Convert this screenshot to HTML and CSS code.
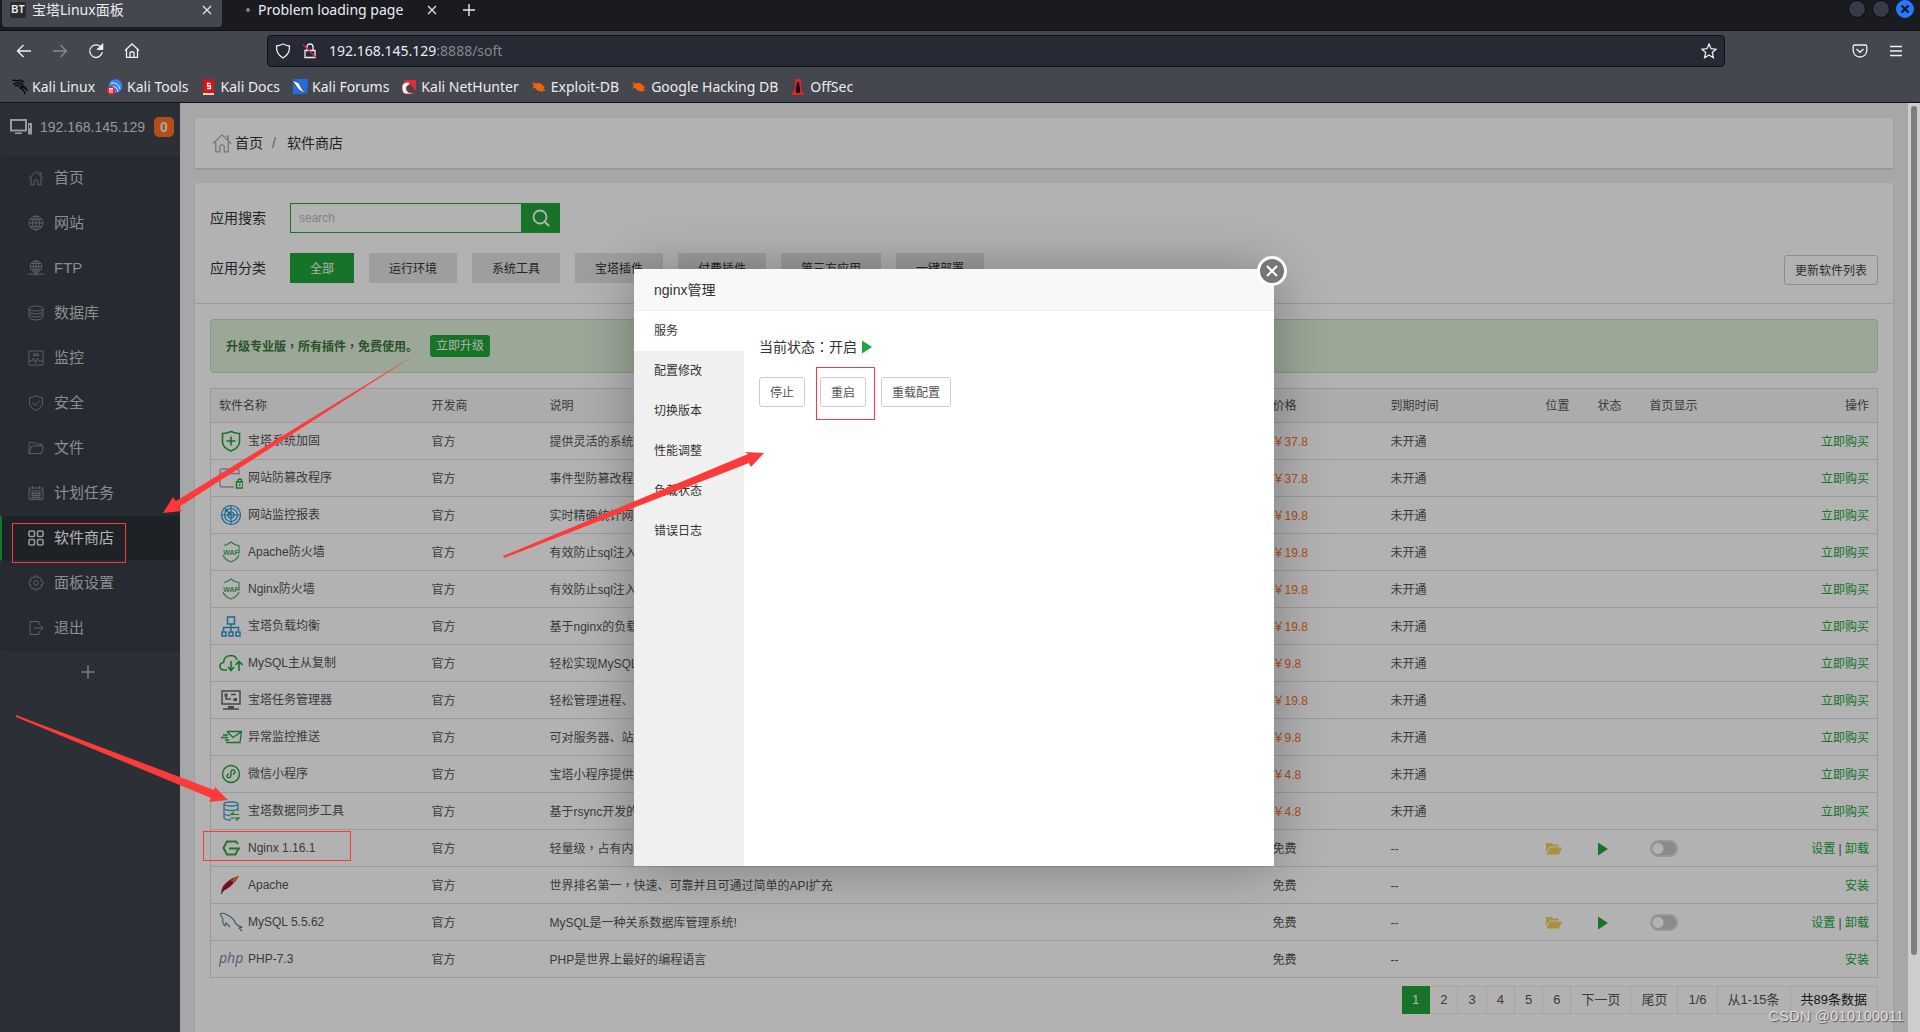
FILE: index.html
```html
<!DOCTYPE html>
<html lang="zh-CN">
<head>
<meta charset="utf-8">
<title>宝塔Linux面板</title>
<link rel="stylesheet" href="styles.css">
</head>
<body>
<svg class="defs" aria-hidden="true">
  <symbol id="i-waf" viewBox="0 0 24 24"><path d="M5 5.500Q9 4.500 12 2Q15 5 20 5.500V14M4 15Q5 19 12 22Q19 19 20 15" fill="none" stroke="#48ac5c" stroke-width="1.100"/><text x="12" y="14.500" text-anchor="middle" font-size="7" font-weight="700" font-family="Liberation Sans, sans-serif" fill="#48ac5c">WAF</text></symbol>
  <symbol id="i-folder" viewBox="0 0 16 14"><path d="M0 3V1.500Q0 1 .5 1H5.500L7 2.500H12.500V4.500H4.500Q3 4.500 2.500 6L0 11Z" fill="#f0cf5c"/><path d="M4 5.500H16L13 12.500H.5Z" fill="#f0cf5c"/></symbol>
  <symbol id="i-play" viewBox="0 0 10 14"><path d="M0 .5L10 7L0 13.500Z" fill="#20a53a"/></symbol>
  <symbol id="i-close" viewBox="0 0 10 10"><path d="M1 1L9 9M9 1L1 9" fill="none" stroke="#e4e4e8" stroke-width="1.300"/></symbol>
  <symbol id="i-bug" viewBox="0 0 16 16"><path d="M1 3L5 4.500Q9 3 12 6.500L14 8L12.500 9L14.500 12L12 11.500L11 13L9 12Q5.500 12 4.500 9L1 9.500L3 7.500L1.500 6L3 5.500Z" fill="#f0640c"/></symbol>
  <symbol id="i-home" viewBox="0 0 16 16"><path d="M.7 8.500L8 1.500L15.300 8.500M3 7V15H6.200V10.500Q8 8.500 9.800 10.500V15H13V7M11 2.500H13V5.500" fill="none" stroke="currentColor"/></symbol>
</svg>

<header class="browser">
  <div class="tabs">
    <div class="tab tab-on"><span class="favicon">BT</span><span class="tab-title">宝塔Linux面板</span><button class="plain" aria-label="关闭标签"><svg class="s10"><use href="#i-close"/></svg></button></div>
    <div class="tab"><span class="dot"></span><span class="tab-title">Problem loading page</span><button class="plain" aria-label="关闭标签"><svg class="s10"><use href="#i-close"/></svg></button></div>
    <button class="plain new-tab" aria-label="新标签"><svg class="s12" viewBox="0 0 12 12"><path d="M6 0V12M0 6H12" stroke="#e8e8ec" stroke-width="1.400"/></svg></button>
    <div class="window-buttons">
      <button class="win" aria-label="最小化"></button><button class="win" aria-label="最大化"></button>
      <button class="win win-close" aria-label="关闭"><svg class="s10" viewBox="0 0 10 10"><path d="M1.500 1.500L8.500 8.500M8.500 1.500L1.500 8.500" stroke="#101830" stroke-width="2.400"/></svg></button>
    </div>
  </div>
  <div class="toolbar">
    <nav class="nav-buttons">
      <button class="plain" aria-label="后退"><svg class="s16" viewBox="0 0 16 16"><path d="M15 8H1.500M7.500 2L1.500 8L7.500 14"/></svg></button>
      <button class="plain dim" aria-label="前进"><svg class="s16" viewBox="0 0 16 16"><path d="M1 8H14.500M8.500 2L14.500 8L8.500 14"/></svg></button>
      <button class="plain" aria-label="刷新"><svg class="s16" viewBox="0 0 16 16"><path d="M13.500 5A6.300 6.300 0 1 0 14.300 9M14.500 1V6H9.500"/><path d="M14.500 1.500V6H10Z" fill="#f0f0f4"/></svg></button>
      <button class="plain" aria-label="主页"><svg class="s16" viewBox="0 0 16 16"><path d="M1 7.500L8 1L15 7.500M2.500 6.500V14.300H13.500V6.500M6 14V9.500Q8 8 10 9.500V14"/></svg></button>
    </nav>
    <div class="address">
      <svg class="s16" viewBox="0 0 16 16"><path d="M8 1Q11 2.500 14.500 3Q15 11 8 15Q1 11 1.500 3Q5 2.500 8 1Z"/></svg>
      <svg class="s16" viewBox="0 0 16 16"><path d="M3 7.500H13V14.500H3ZM5 7.500V4Q5 1 8 1Q11 1 11 4V7.500"/><path class="slashed" d="M1 1.500L14.500 15"/></svg>
      <span class="url">192.168.145.129<span class="url-rest">:8888/soft</span></span>
      <button class="plain" aria-label="收藏"><svg class="s16" viewBox="0 0 16 16"><path d="M8 1L10 5.700L15 6.200L11.300 9.600L12.400 14.700L8 12L3.600 14.700L4.700 9.600L1 6.200L6 5.700Z"/></svg></button>
    </div>
    <div class="tools">
      <button class="plain" aria-label="Pocket"><svg class="s16" viewBox="0 0 16 16"><path d="M2.500 2H13.500Q14.800 2 14.800 3.500V7.500A6.800 6.500 0 0 1 1.200 7.500V3.500Q1.200 2 2.500 2ZM4.500 6L8 9.300L11.500 6"/></svg></button>
      <button class="plain" aria-label="菜单"><svg class="s16" viewBox="0 0 16 16"><path d="M2 3.500H14M2 8H14M2 12.500H14"/></svg></button>
    </div>
  </div>
  <nav class="bookmarks">
    <a href="#"><svg class="s16" viewBox="0 0 16 16"><path d="M0 1L5 2L8 1L12 3M1 5L6 4Q10 3 11 7Q8 7 8 9Q12 10 13 15M3 7L8 6M8 8Q14 7 15 12" fill="none" stroke="#0c0d10" stroke-width="1.600"/></svg>Kali Linux</a>
    <a href="#"><svg class="s16" viewBox="0 0 16 16"><circle cx="8.500" cy="7" r="6.800" fill="#3b82f6"/><path d="M4 4Q11 3 13 10M5 8Q10 7 11 13" stroke="#dbe8ff" fill="none"/><circle cx="4" cy="11.500" r="4.300" fill="#e5252a"/><path d="M2 9.500H6M3 9.500V14M5 9.500V14" stroke="#fff"/></svg>Kali Tools</a>
    <a href="#"><svg class="s16" viewBox="0 0 16 16"><path d="M2 0H13V16H2Z" fill="#d81414"/><path d="M2 14H13V16H2Z" fill="#e7d6d3"/><path d="M9.500 4.500H6.500V7H9.500V9.500H6" fill="none" stroke="#fff" stroke-width="1.300"/></svg>Kali Docs</a>
    <a href="#"><svg class="s16" viewBox="0 0 16 16"><path d="M1 0H16L15 15H1Z" fill="#1e6fe6"/><path d="M0 1L7 4L10 10L14 15L7 11L4 7Z" fill="#f4f7ff" stroke="#222" stroke-width=".6"/></svg>Kali Forums</a>
    <a href="#"><svg class="s16" viewBox="0 0 16 16"><path d="M3 1H15V12L9 5L4 8Z" fill="#e22b35"/><path d="M1 10Q0 3 7 3Q10 4 8 6Q3 8 7 13L14 15H4Q1 14 1 10Z" fill="#f5f2f2" stroke="#b01824" stroke-width=".7"/></svg>Kali NetHunter</a>
    <a href="#"><svg class="s16"><use href="#i-bug"/></svg>Exploit-DB</a>
    <a href="#"><svg class="s16"><use href="#i-bug"/></svg>Google Hacking DB</a>
    <a href="#"><svg class="s16" viewBox="0 0 16 16"><path d="M5 0H11V10L14 16H1L5 10Z" fill="#e02424"/><path d="M7 3H9L10 10V14H6V10Z" fill="#220808"/></svg>OffSec</a>
  </nav>
</header>

<div class="viewport">
  <div class="page">
    <aside class="sidebar">
      <div class="host">
        <svg class="host-icon" viewBox="0 0 22 16"><path d="M1 1H16V11.500H1Z" fill="none" stroke="#dcdcdc" stroke-width="2"/><path d="M5 13.500H12V15H5ZM18 4H22V15.500H18Z" fill="#dcdcdc"/><path d="M19.500 6V9" stroke="#555"/></svg>
        <span>192.168.145.129</span><b class="badge">0</b>
      </div>
      <nav class="menu">
        <a href="#"><svg class="s16"><use href="#i-home"/></svg>首页</a>
        <a href="#"><svg class="s16" viewBox="0 0 16 16"><circle cx="8" cy="8" r="7"/><ellipse cx="8" cy="8" rx="3.500" ry="7"/><path d="M8 1V15M1 8H15M2 4.500H14M2 11.500H14"/></svg>网站</a>
        <a href="#"><svg class="s16" viewBox="0 0 16 16"><circle cx="8" cy="6.500" r="5.800"/><ellipse cx="8" cy="6.500" rx="2.800" ry="5.800"/><path d="M8 1V12M2 6.500H14M3 3.500H13M3 9.500H13M0 14H16M6 14.500H10"/></svg>FTP</a>
        <a href="#"><svg class="s16" viewBox="0 0 16 16"><ellipse cx="8" cy="3.500" rx="7" ry="2.500"/><path d="M1 3.500V12.500Q3 15 8 15Q13 15 15 12.500V3.500M1 6.500Q3 9 8 9Q13 9 15 6.500M1 9.500Q3 12 8 12Q13 12 15 9.500"/></svg>数据库</a>
        <a href="#"><svg class="s16" viewBox="0 0 16 16"><path d="M1 1H15V15H1ZM1 11H4L5.500 8L7.500 13L9.500 8L11 11H15M5 4H11M5 5.500H11"/></svg>监控</a>
        <a href="#"><svg class="s16" viewBox="0 0 16 16"><path d="M8 .7Q11 2.500 14.500 2.500V8Q14 13 8 15.500Q2 13 1.500 8V2.500Q5 2.500 8 .7ZM4.500 7.500L7.300 10.500L12 5.500"/></svg>安全</a>
        <a href="#"><svg class="s16" viewBox="0 0 16 16"><path d="M1 13.500V3.500Q1 2.500 2 2.500H6L7.500 4H13.500V6M1 13.500L3.500 6H15.300L13.500 13.500Z"/></svg>文件</a>
        <a href="#"><svg class="s16" viewBox="0 0 16 16"><path d="M1 3H15V14.500H1ZM1 6H15M4.500 1V4M11.500 1V4M3 8.500H13M3 10.500H13M3 12.500H13M5 7V14M8 7V14M11 7V14"/></svg>计划任务</a>
        <a href="#" class="on"><svg class="s16" viewBox="0 0 16 16"><g stroke-width="1.600"><rect x="1" y="1" width="5.500" height="5.500" rx="1"/><rect x="9.500" y="1" width="5.500" height="5.500" rx="1"/><rect x="1" y="9.500" width="5.500" height="5.500" rx="1"/><rect x="9.500" y="9.500" width="5.500" height="5.500" rx="1"/></g></svg>软件商店</a>
        <a href="#"><svg class="s16" viewBox="0 0 16 16"><path d="M6.800 1H9.200L9.700 3L11.500 2L13.500 4L12.800 6L15 6.800V9.200L12.800 10L13.800 12L12 13.800L10 12.800L9.200 15H6.800L6 12.800L4 13.800L2.200 12L3.200 10L1 9.200V6.800L3.200 6L2.200 4L4 2.200L6 3.200Z"/><circle cx="8" cy="8" r="2.300"/></svg>面板设置</a>
        <a href="#"><svg class="s16" viewBox="0 0 16 16"><path d="M11 5V1.500H2V14.500H11V11M6 8H15M12.500 5.500L15 8L12.500 10.500"/></svg>退出</a>
      </nav>
      <button class="plain add" aria-label="添加"><svg class="s16" viewBox="0 0 16 16"><path d="M8 1.500V14.500M1.500 8H14.500" stroke="#b5b8bc" stroke-width="1.500"/></svg></button>
    </aside>

    <main class="main">
      <nav class="card crumbs">
        <svg class="s20"><use href="#i-home"/></svg><a href="#">首页</a><span class="slash">/</span><span>软件商店</span>
      </nav>
      <section class="card store">
        <div class="filters">
          <div class="filter-row">
            <label for="search">应用搜索</label>
            <form class="search"><input id="search" type="text" placeholder="search"><button type="button" aria-label="搜索"><svg class="s18" viewBox="0 0 18 18"><circle cx="8" cy="8" r="6.500" fill="none" stroke="#fff" stroke-width="1.800"/><path d="M12.500 12.500L17 17" stroke="#fff" stroke-width="2"/></svg></button></form>
          </div>
          <div class="filter-row">
            <span class="label">应用分类</span>
            <div class="cats"><button class="on">全部</button><button>运行环境</button><button>系统工具</button><button>宝塔插件</button><button>付费插件</button><button>第三方应用</button><button>一键部署</button></div>
            <button class="btn refresh">更新软件列表</button>
          </div>
        </div>
        <div class="content">
          <div class="alert"><b>升级专业版<span class="mid" lang="zh-TW">，</span>所有插件<span class="mid" lang="zh-TW">，</span>免费使用。</b><button>立即升级</button></div>
          <table class="apps">
            <colgroup><col class="c-name"><col class="c-dev"><col><col class="c-dev"><col class="c-time"><col class="c-small"><col class="c-small"><col class="c-show"><col class="c-ops"></colgroup>
            <thead><tr><th>软件名称</th><th>开发商</th><th>说明</th><th>价格</th><th>到期时间</th><th>位置</th><th>状态</th><th>首页显示</th><th class="ops">操作</th></tr></thead>
            <tbody>
              <tr><td><span class="name"><svg class="s24" viewBox="0 0 24 24"><path d="M12 2.500Q16 4.500 20.500 4.500V13Q20 19 12 22Q4 19 3.500 13V4.500Q8 4.500 12 2.500ZM12 7.500V16.500M7.500 12H16.500" fill="none" stroke="#20a53a" stroke-width="1.600"/></svg>宝塔系统加固</span></td><td>官方</td><td>提供灵活的系统加固功能</td><td class="price">￥37.8</td><td>未开通</td><td></td><td></td><td></td><td class="ops"><a href="#">立即购买</a></td></tr>
              <tr><td><span class="name"><svg class="s24" viewBox="0 0 24 24"><path d="M20 9V5Q20 3 18 3H3Q1 3 1 5V19Q1 21 3 21H15M1 7.500H20" fill="none" stroke="#a9a9b8" stroke-width="1.400"/><path d="M17.500 16H24V22H17.500ZM19 16V14Q20.700 12 22.500 14V16M20.700 18V20" fill="none" stroke="#20a53a" stroke-width="1.400"/></svg>网站防篡改程序</span></td><td>官方</td><td>事件型防篡改程序</td><td class="price">￥37.8</td><td>未开通</td><td></td><td></td><td></td><td class="ops"><a href="#">立即购买</a></td></tr>
              <tr><td><span class="name"><svg class="s24" viewBox="0 0 24 24"><g fill="none" stroke="#2a98d4" stroke-width="1.200"><circle cx="12" cy="12" r="9.500"/><circle cx="12" cy="12" r="6.500"/><circle cx="12" cy="12" r="3"/><path d="M12 2V22M2 12H22M12 12L6 6"/></g><circle cx="7.500" cy="7.500" r="1.500" fill="#2a98d4"/></svg>网站监控报表</span></td><td>官方</td><td>实时精确统计网站流量</td><td class="price">￥19.8</td><td>未开通</td><td></td><td></td><td></td><td class="ops"><a href="#">立即购买</a></td></tr>
              <tr><td><span class="name"><svg class="s24"><use href="#i-waf"/></svg>Apache防火墙</span></td><td>官方</td><td>有效防止sql注入</td><td class="price">￥19.8</td><td>未开通</td><td></td><td></td><td></td><td class="ops"><a href="#">立即购买</a></td></tr>
              <tr><td><span class="name"><svg class="s24"><use href="#i-waf"/></svg>Nginx防火墙</span></td><td>官方</td><td>有效防止sql注入</td><td class="price">￥19.8</td><td>未开通</td><td></td><td></td><td></td><td class="ops"><a href="#">立即购买</a></td></tr>
              <tr><td><span class="name"><svg class="s24" viewBox="0 0 24 24"><path d="M8.500 3H15.500V10H8.500ZM12 10V17M4.500 17V13.500H19.500V17M3 18H7V22H3ZM10 18H14V22H10ZM17 18H21V22H17Z" fill="none" stroke="#2a98d4" stroke-width="1.500"/></svg>宝塔负载均衡</span></td><td>官方</td><td>基于nginx的负载均衡</td><td class="price">￥19.8</td><td>未开通</td><td></td><td></td><td></td><td class="ops"><a href="#">立即购买</a></td></tr>
              <tr><td><span class="name"><svg class="s24" viewBox="0 0 24 24"><path d="M8 19H5Q1 19 1 15Q1 12 4.500 11.500Q5 5 11.500 4.500Q17 4.500 18 9M12 10V19M9 16L12 19.500L15 16M20 20V11M16.500 14L20 10.500L23.500 14" fill="none" stroke="#20a53a" stroke-width="1.600"/></svg>MySQL主从复制</span></td><td>官方</td><td>轻松实现MySQL主从</td><td class="price">￥9.8</td><td>未开通</td><td></td><td></td><td></td><td class="ops"><a href="#">立即购买</a></td></tr>
              <tr><td><span class="name"><svg class="s24" viewBox="0 0 24 24"><path d="M3 3H21V16H3ZM4 21H20M12 18V21M7 7V11H12M12 6.500H17M14 12H17" fill="none" stroke="#666" stroke-width="1.500"/><path d="M5.500 5.500H8.500V8.500H5.500ZM15 10H18V13H15ZM9 18H15V21H9Z" fill="#666"/></svg>宝塔任务管理器</span></td><td>官方</td><td>轻松管理进程、资源</td><td class="price">￥19.8</td><td>未开通</td><td></td><td></td><td></td><td class="ops"><a href="#">立即购买</a></td></tr>
              <tr><td><span class="name"><svg class="s24" viewBox="0 0 24 24"><path d="M8 6.500H22.500L21 17.500H7M8.500 7L14 12.500L22 7M4 10H9M2 12.500H9M6 15H10" fill="none" stroke="#20a53a" stroke-width="1.300"/></svg>异常监控推送</span></td><td>官方</td><td>可对服务器、站点异常</td><td class="price">￥9.8</td><td>未开通</td><td></td><td></td><td></td><td class="ops"><a href="#">立即购买</a></td></tr>
              <tr><td><span class="name"><svg class="s24" viewBox="0 0 24 24"><g fill="none" stroke="#20a53a" stroke-width="1.400"><circle cx="12" cy="12" r="8.500"/><path d="M10 12Q7.500 12.500 8 14.500Q9 17 11.500 15Q12 14 12 12V9.500Q13 7 15.500 8.500Q17 11 14 12"/></g></svg>微信小程序</span></td><td>官方</td><td>宝塔小程序提供服务器</td><td class="price">￥4.8</td><td>未开通</td><td></td><td></td><td></td><td class="ops"><a href="#">立即购买</a></td></tr>
              <tr><td><span class="name"><svg class="s24" viewBox="0 0 24 24"><path d="M5 5Q5 3 12 3Q19 3 19 5Q19 7 12 7Q5 7 5 5V19Q6 21 12 21M5 9.500Q6 11.500 12 11.500Q18 11.500 19 9.500M5 14.500Q6 16.500 11 16.500M19 5V12" fill="none" stroke="#3f9fd2" stroke-width="1.300"/><path d="M20 15.500H12L15 13M12 19H20L17 21.500" fill="none" stroke="#20a53a" stroke-width="1.200"/></svg>宝塔数据同步工具</span></td><td>官方</td><td>基于rsync开发的同步工具</td><td class="price">￥4.8</td><td>未开通</td><td></td><td></td><td></td><td class="ops"><a href="#">立即购买</a></td></tr>
              <tr><td><span class="name"><svg class="s24" viewBox="0 0 24 24"><path d="M19 8L17 5.500H8L4.500 12L8 18.500H16.500L19.500 12.500H10M17 12.500H21" fill="none" stroke="#38a545" stroke-width="2"/></svg>Nginx 1.16.1</span></td><td>官方</td><td>轻量级<span class="mid" lang="zh-TW">，</span>占有内存少</td><td>免费</td><td>--</td><td><svg class="folder"><use href="#i-folder"/></svg></td><td><svg class="play"><use href="#i-play"/></svg></td><td><input class="switch" type="checkbox" aria-label="Nginx 首页显示"></td><td class="ops"><a href="#">设置</a> | <a href="#">卸载</a></td></tr>
              <tr><td><span class="name"><svg class="s24" viewBox="0 0 24 24"><path d="M2 20Q2 14 8 9Q13 4.500 20 3Q17 8 13 12Q8 17 3 18Z" fill="#c01840"/><path d="M12 8Q15 4.500 20 3L14 10Z" fill="#e8912d"/><path d="M2 21Q6 13 14 8" fill="none" stroke="#5d102c"/></svg>Apache</span></td><td>官方</td><td>世界排名第一<span class="mid" lang="zh-TW">，</span>快速、可靠并且可通过简单的API扩充</td><td>免费</td><td>--</td><td></td><td></td><td></td><td class="ops"><a href="#">安装</a></td></tr>
              <tr><td><span class="name"><svg class="s24" viewBox="0 0 24 24"><path d="M1 4Q5 2 8 5Q14 7 17 14Q19 16 23 17L20 18L23 21M1 4L4 9Q3 14 6 16L7 13L11 17" fill="none" stroke="#4d8198" stroke-width="1.100"/></svg>MySQL 5.5.62</span></td><td>官方</td><td>MySQL是一种关系数据库管理系统!</td><td>免费</td><td>--</td><td><svg class="folder"><use href="#i-folder"/></svg></td><td><svg class="play"><use href="#i-play"/></svg></td><td><input class="switch" type="checkbox" aria-label="MySQL 首页显示"></td><td class="ops"><a href="#">设置</a> | <a href="#">卸载</a></td></tr>
              <tr><td><span class="name"><svg class="s24" viewBox="0 0 24 24"><text x="0" y="16" font-size="14" font-style="italic" font-family="Open Sans, sans-serif" fill="#7680b8">php</text></svg>PHP-7.3</span></td><td>官方</td><td>PHP是世界上最好的编程语言</td><td>免费</td><td>--</td><td></td><td></td><td></td><td class="ops"><a href="#">安装</a></td></tr>
            </tbody>
          </table>
          <nav class="pager"><span class="cur">1</span><a href="#">2</a><a href="#">3</a><a href="#">4</a><a href="#">5</a><a href="#">6</a><a href="#">下一页</a><a href="#">尾页</a><span>1/6</span><span>从1-15条</span><span class="total">共89条数据</span></nav>
        </div>
      </section>
    </main>

    <div class="shade">
      <section class="modal" role="dialog" aria-label="nginx管理">
        <h2>nginx管理</h2>
        <button class="modal-close" aria-label="关闭"><svg class="s12" viewBox="0 0 12 12"><path d="M1 1L11 11M11 1L1 11" stroke="#fff" stroke-width="2"/></svg></button>
        <div class="modal-body">
          <nav class="side-tabs"><a href="#" class="on">服务</a><a href="#">配置修改</a><a href="#">切换版本</a><a href="#">性能调整</a><a href="#">负载状态</a><a href="#">错误日志</a></nav>
          <div class="pane">
            <p><span>当前状态<span class="mid" lang="zh-TW">：</span>开启</span><svg class="play"><use href="#i-play"/></svg></p>
            <div class="actions"><button class="btn">停止</button><button class="btn">重启</button><button class="btn">重载配置</button></div>
          </div>
        </div>
      </section>
    </div>
  </div>
  <div class="scrollbar"><div class="thumb"></div></div>
</div>

<svg class="marks" viewBox="0 0 1920 1032" aria-hidden="true">
  <g fill="#fd3a38"><path d="M418 353L176 501L173 497L163 513L182 511L179 507Z"/><path d="M503 556L748 454L745 452L764 453L751 467L749 463L504 558Z"/><path d="M16 715L214 790L215 787L228 800L209 802L211 798L16 717Z"/></g>
  <g fill="none" stroke="#fd3a38"><rect x="12.500" y="523.500" width="113" height="39"/><rect x="203.500" y="831.500" width="147" height="29"/><rect x="816.500" y="367.500" width="58" height="52"/></g>
</svg>
<div class="watermark">CSDN @010100011</div>
</body>
</html>
```
FILE: styles.css
```css
* { box-sizing: border-box; }
body {
  position: relative;
  display: flex;
  flex-direction: column;
  height: 100vh;
  margin: 0;
  overflow: hidden;
  font: 12px/20px "Liberation Sans", "Noto Sans CJK SC", sans-serif;
  color: #555;
}
a { color: inherit; text-decoration: none; }
button, input { font: inherit; margin: 0; }
svg { flex: none; display: block; }
.defs { position: absolute; width: 0; height: 0; }
.s10 { width: 10px; height: 10px; }
.s12 { width: 12px; height: 12px; }
.s16 { width: 16px; height: 16px; }
.s18 { width: 18px; height: 18px; }
.s20 { width: 20px; height: 20px; }
.s24 { width: 24px; height: 24px; }
.plain { display: flex; padding: 0; border: 0; background: none; color: inherit; }
/* punctuation centred in its cell */
.mid { font-family: "Noto Sans CJK TC", sans-serif; }

/* browser frame */
.browser {
  flex: none;
  background: #44474d;
  border-bottom: 1px solid #121317;
  color: #ececf0;
  font: 14px/20px "Noto Sans", "Noto Sans CJK SC", sans-serif;
}
.tabs { display: flex; height: 31px; padding-left: 2px; background: #1a1b20; border-bottom: 1px solid #0e0f12; }
.tab { display: flex; align-items: center; gap: 6px; width: 220px; height: 27px; padding: 0 10px 8px 8px; }
.tab + .tab { width: 225px; padding-left: 24px; gap: 8px; }
.tab-on { background: #44474d; border-radius: 0 0 4px 4px; }
.tab-title { flex: 1; white-space: nowrap; }
.favicon { width: 16px; height: 16px; border-radius: 2px; background: #2b2b2e; font: bold 10px/16px "Liberation Sans", sans-serif; text-align: center; }
.dot { width: 4px; height: 4px; border-radius: 50%; background: #85868c; }
.new-tab { padding: 4px 16px; }
.window-buttons { display: flex; gap: 6px; margin-left: auto; padding-right: 6px; }
.win { display: flex; align-items: center; justify-content: center; width: 18px; height: 18px; padding: 0; border: 1px solid #0b0c0f; border-radius: 50%; background: #363b47; }
.win-close { background: #2777ff; border-color: #2777ff; }
.toolbar { display: flex; align-items: center; height: 40px; padding: 0 16px; }
.toolbar svg { fill: none; stroke: #f0f0f4; stroke-width: 1.3; }
.toolbar .slashed { stroke: #e22850; }
.nav-buttons { display: flex; gap: 20px; width: 251px; }
.dim { opacity: .4; }
.address { display: flex; align-items: center; gap: 11px; flex: 1; height: 32px; padding: 0 7px; border: 1px solid #0f1014; border-radius: 4px; background: #272934; }
.url { flex: 1; }
.url-rest { color: #85868e; }
.tools { display: flex; gap: 20px; width: 179px; justify-content: flex-end; }
.bookmarks { display: flex; gap: 12px; height: 31px; padding: 6px 12px 0; }
.bookmarks a { display: flex; align-items: center; gap: 4px; height: 20px; white-space: nowrap; }

/* panel page */
.viewport { display: flex; flex: 1; min-height: 0; }
.page { position: relative; display: flex; flex: 1; min-width: 0; overflow: hidden; background: #f0f0f0; }
.scrollbar { width: 12px; padding: 3px; background: #cdcdcd; }
.thumb { height: 92%; border-radius: 3px; background: #7b7f80; }
.sidebar { width: 180px; flex: none; background: #3e464f; color: #c8cacc; }
.host { display: flex; align-items: center; height: 53px; padding: 0 6px 6px 10px; font-size: 14px; color: #d5d7d9; }
.host-icon { width: 22px; height: 16px; margin-right: 8px; }
.badge { width: 20px; height: 20px; margin-left: auto; border-radius: 5px; background: #ff7020; text-align: center; color: #eee; }
.menu { background: #363e46; }
.menu a { display: flex; align-items: center; gap: 10px; height: 45px; padding-left: 26px; border-left: 2px solid #3a4146; border-bottom: 1px solid #343b43; font-size: 15px; }
.menu svg { fill: none; stroke: #858a8e; stroke-width: 1; color: #858a8e; }
.menu .on { background: #2c3138; border-left-color: #20a53a; color: #fff; }
.menu .on svg { stroke: #d8d8d8; }
.add { width: 100%; padding: 13px 0 0 80px; }
.main { flex: 1; min-width: 0; padding: 15px; }
.card { background: #fff; box-shadow: 0 1px 2px #ccc; }
.crumbs { display: flex; align-items: center; height: 50px; padding-left: 17px; font-size: 14px; color: #333; }
.crumbs svg { color: #aaa; margin-right: 3px; }
.slash { margin: 0 11px 0 9px; color: #888; }
.store { margin-top: 15px; min-height: 900px; }
.filters { display: grid; gap: 20px; padding: 20px 15px; border-bottom: 1px solid #ddd; }
.filter-row { display: flex; align-items: center; height: 30px; color: #333; }
.filter-row label, .label { width: 80px; font-size: 14px; }
.search { display: flex; }
.search input { width: 232px; height: 30px; padding: 0 8px; border: 1px solid #20a53a; background: transparent; outline: 0; }
.search input::placeholder { color: #bbb; }
.search button { display: flex; align-items: center; justify-content: center; width: 38px; padding: 0; border: 0; background: #20a53a; }
.cats { display: flex; gap: 15px; }
.cats button { height: 30px; padding: 1px 20px 0; border: 0; background: #e3e3e3; color: #333; }
.cats .on { background: #20a53a; color: #fff; }
.btn { height: 30px; padding: 1px 10px 0; border: 1px solid #ccc; border-radius: 3px; background: transparent; color: #555; }
.filter-row .refresh { margin: 4px 0 0 auto; color: #444; }
.content { padding: 15px; }
.alert { display: flex; align-items: center; gap: 12px; height: 54px; padding-left: 15px; border: 1px solid #c5dfb2; border-radius: 4px; background: #dff0d8; color: #3c763d; }
.alert button { height: 22px; padding: 0 6px; border: 0; border-radius: 3px; background: #20a53a; color: #fff; line-height: 22px; }
.apps { width: 100%; margin-top: 15px; table-layout: fixed; border-collapse: collapse; border: 1px solid #ddd; }
.c-name { width: 213px; }
.c-dev { width: 118px; }
.c-time { width: 155px; }
.c-small { width: 52px; }
.c-show { width: 109px; }
.c-ops { width: 127px; }
.apps th, .apps td { height: 37px; padding: 1px 8px 0; border-bottom: 1px solid #ddd; text-align: left; font-weight: 400; white-space: nowrap; }
.apps td:first-child { padding-top: 0; }
.apps th { height: 34px; background: #f6f6f6; }
.apps .ops { text-align: right; }
.ops a { color: #20a53a; }
.apps .price { color: #fc6d26; }
.name { display: flex; align-items: center; gap: 5px; }
.folder { width: 16px; height: 14px; }
.play { width: 10px; height: 14px; }
.switch { display: block; width: 28px; height: 17px; border: 2px solid #d8d8d8; border-radius: 9px; background: radial-gradient(circle at 6px 50%, #fff 5px, #c8c8c8 6px); appearance: none; }
.pager { display: flex; justify-content: flex-end; margin-top: 8px; font-size: 13px; line-height: 26px; }
.pager > * { padding: 0 10px; border: 1px solid #ececec; border-left: 0; }
.pager .cur { border-color: #20a53a; background: #20a53a; color: #fff; }
.pager .total { color: #222; }

/* dialog */
.shade { position: absolute; inset: 0; display: flex; align-items: center; justify-content: center; background: rgba(0, 0, 0, .3); }
.modal { position: relative; width: 640px; height: 597px; display: flex; flex-direction: column; background: #fff; box-shadow: 1px 1px 50px rgba(0, 0, 0, .3); color: #333; }
.modal h2 { height: 42px; margin: 0; padding-left: 20px; border-bottom: 1px solid #eee; background: #f8f8f8; font-size: 14px; font-weight: 400; line-height: 42px; }
.modal-close { position: absolute; top: -13px; right: -13px; display: flex; align-items: center; justify-content: center; width: 30px; height: 30px; padding: 0; border: 3px solid #fff; border-radius: 50%; background: #767676; }
.modal-body { display: flex; flex: 1; }
.side-tabs { width: 110px; background: #f0f0f0; }
.side-tabs a { display: block; padding: 1px 0 0 20px; line-height: 39px; }
.side-tabs .on { background: #fff; }
.pane { padding: 25px 15px; }
.pane p { display: flex; align-items: center; gap: 5px; margin: 0 0 20px; font-size: 14px; }
.actions { display: flex; gap: 15px; }

.marks { position: absolute; top: 0; left: 0; width: 1920px; height: 1032px; pointer-events: none; }
.watermark { position: absolute; right: 16px; bottom: 6px; font-size: 15px; color: #ddd; text-shadow: 1px 1px 1px #555; }
```
